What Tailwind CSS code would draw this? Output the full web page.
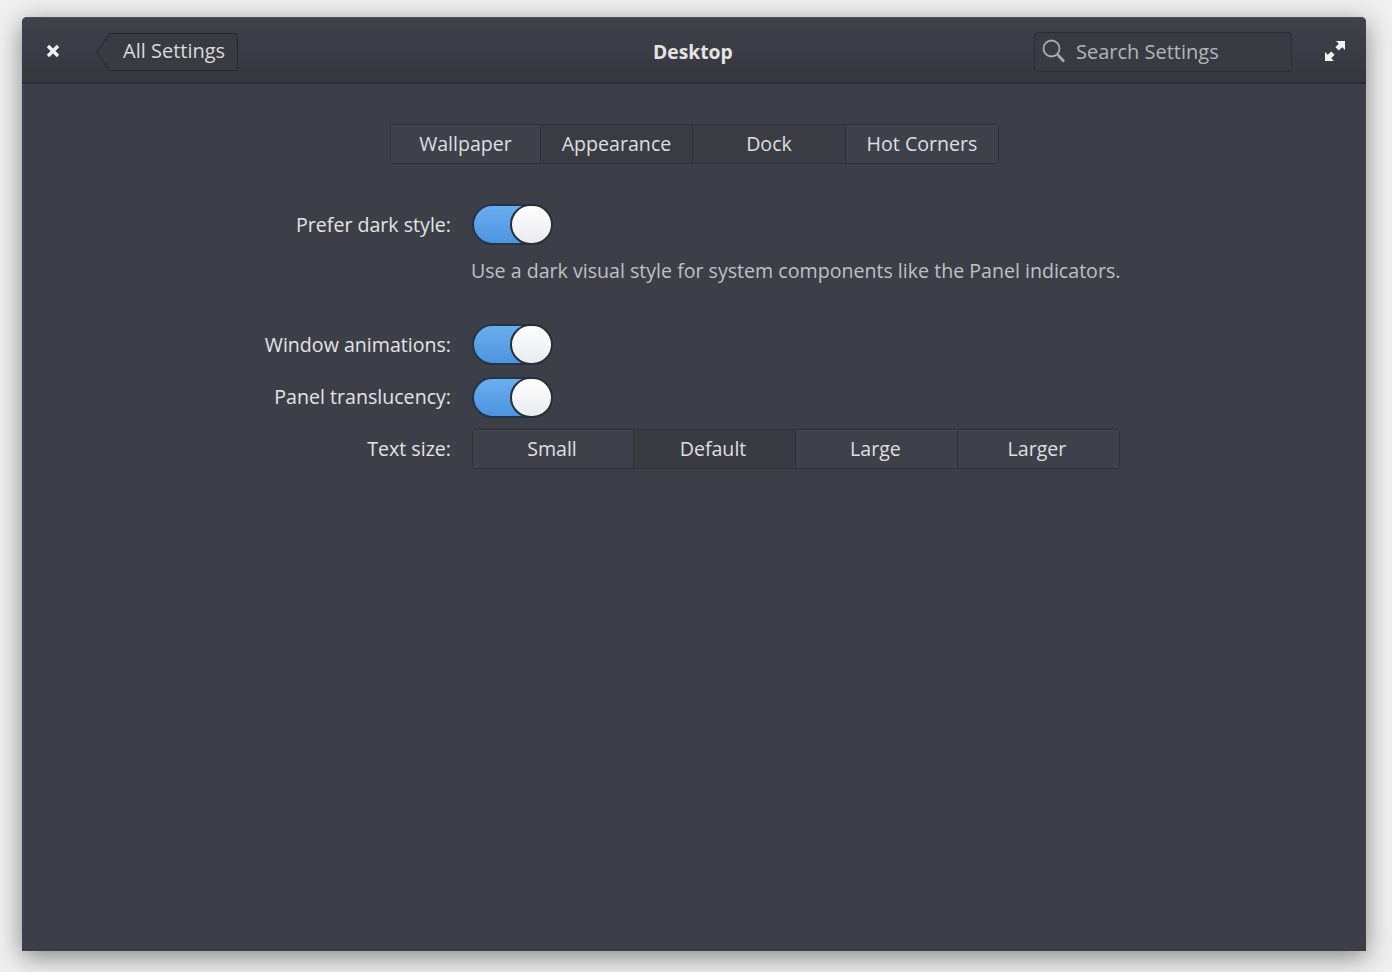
<!DOCTYPE html>
<html lang="en">
<head>
    <meta charset="UTF-8">
    <title>Desktop</title>
    <script src="https://cdn.jsdelivr.net/npm/@tailwindcss/browser@4"></script>
</head>
<body class="w-[1392px] h-[972px] overflow-hidden bg-[#f0f0f0] font-['Open_Sans',sans-serif]">
    <div class="pl-[22px] pt-[17px]">
        <div class="w-[1344px] h-[934px] flex flex-col bg-[#3c3f47] rounded-t-[5px] shadow-[0_6px_26px_rgba(0,0,0,0.45)]">
            <!-- header -->
            <header class="h-[67px] shrink-0 relative flex items-center pl-[23px] pr-[20px] rounded-t-[5px] bg-gradient-to-b from-[#3f424a] to-[#34373e] border-t border-[#4d5058] border-b-2 border-b-[#2b2e34]">
                <svg class="w-4 h-4 mt-[1px]" viewBox="0 0 16 16"><path d="M3 3l10 10M13 3L3 13" stroke="#f2f2f2" stroke-width="3.4" /></svg>
                <div class="ml-[35px] mt-[3px] relative w-[142px] h-[38px]">
                    <svg class="absolute inset-0" width="142" height="38" viewBox="0 0 142 38"><path d="M13.5.5H140a1.5 1.5 0 0 1 1.500 1.500V36a1.500 1.500 0 0 1-1.500 1.500H13.500L.8 19z" fill="#383b42" stroke="#24262b"/></svg>
                    <span class="absolute left-[27px] top-[3px] text-[20px] leading-[30px] text-[#dadada]">All Settings</span>
                </div>
                <h1 class="absolute left-[631px] top-[19px] text-[19.3px] leading-[30px] font-bold text-[#e4e4e4]">Desktop</h1>
                <div class="ml-auto w-[258px] h-[40px] mt-[3px] flex items-center rounded-[4px] bg-[#383b42] border border-[#2c2e34] mr-[32px]">
                    <svg class="ml-[6px] w-[25px] h-[25px] -mt-[3px]" viewBox="0 0 25 25" fill="none" stroke="#a9abaf"><circle cx="10.500" cy="10.500" r="8" stroke-width="1.800"/><path d="M16.500 16.500L23 23.500" stroke-width="2.600"/></svg>
                    <span class="ml-[10px] mt-[1px] text-[20px] leading-[30px] text-[#b4b5b8]">Search Settings</span>
                </div>
                <svg class="w-[22px] h-[22px] mt-[2px]" viewBox="0 0 22 22" fill="#f2f2f2"><path d="M12 1h9v9l-2.800-2.800-3.400 3.400-3.400-3.400 3.400-3.400zM1 21v-9l2.800 2.800 3.400-3.400 3.400 3.400-3.400 3.400L10 21z"/></svg>
            </header>

            <!-- tabs -->
            <div class="flex mt-[40px] ml-[368px]">
                <div class="flex h-[40px] rounded-[3px] border border-[#2d3036] text-[19.6px] text-[#dfdfe0]">
                    <div class="w-[150px] flex items-center justify-center bg-[#3e4149] border-r border-[#2d3036] shadow-[inset_0_1px_0_rgba(255,255,255,0.04)]">Wallpaper</div>
                    <div class="w-[152px] flex items-center justify-center bg-[#393c43] border-r border-[#2d3036]">Appearance</div>
                    <div class="w-[153px] flex items-center justify-center bg-[#3a3d44] border-r border-[#2d3036]">Dock</div>
                    <div class="w-[152px] flex items-center justify-center bg-[#3e4149] shadow-[inset_0_1px_0_rgba(255,255,255,0.04)]">Hot Corners</div>
                </div>
            </div>

            <!-- settings form -->
            <div class="mt-[40px] ml-[245px] grid grid-cols-[184px_auto] justify-start gap-x-[21px] text-[19.6px] text-[#e4e4e5]">
                <div class="h-[41px] flex items-center justify-end whitespace-nowrap">Prefer dark style:</div>
                <div class="h-[41px] relative w-[82px]">
                    <div class="w-[80px] h-[41px] rounded-full border-2 border-[#22354a] bg-gradient-to-b from-[#6aaeee] to-[#4d94e0]"></div>
                    <div class="absolute left-[38px] top-0 w-[43px] h-[41px] rounded-full border-2 border-[#2a2e35] bg-gradient-to-b from-white to-[#e8ebf0]"></div>
                </div>

                <div></div>
                <div class="mt-[11px] h-[30px] leading-[30px] text-[#bfc1c4] mb-[38px] -ml-[1px] whitespace-nowrap">Use a dark visual style for system components like the Panel indicators.</div>

                <div class="h-[41px] flex items-center justify-end whitespace-nowrap">Window animations:</div>
                <div class="h-[41px] relative w-[82px]">
                    <div class="w-[80px] h-[41px] rounded-full border-2 border-[#22354a] bg-gradient-to-b from-[#6aaeee] to-[#4d94e0]"></div>
                    <div class="absolute left-[38px] top-0 w-[43px] h-[41px] rounded-full border-2 border-[#2a2e35] bg-gradient-to-b from-white to-[#e8ebf0]"></div>
                </div>

                <div class="mt-[11px] h-[41px] flex items-center justify-end whitespace-nowrap">Panel translucency:</div>
                <div class="mt-[12px] h-[41px] relative w-[82px]">
                    <div class="w-[80px] h-[41px] rounded-full border-2 border-[#22354a] bg-gradient-to-b from-[#6aaeee] to-[#4d94e0]"></div>
                    <div class="absolute left-[38px] top-0 w-[43px] h-[41px] rounded-full border-2 border-[#2a2e35] bg-gradient-to-b from-white to-[#e8ebf0]"></div>
                </div>

                <div class="mt-[11px] h-[40px] flex items-center justify-end whitespace-nowrap">Text size:</div>
                <div class="mt-[11px] w-[648px] flex h-[40px] rounded-[3px] border border-[#2d3036] text-[#dfdfe0]">
                    <div class="w-[161px] pr-[2px] flex items-center justify-center bg-[#3e4149] border-r border-[#2d3036] shadow-[inset_0_1px_0_rgba(255,255,255,0.04)]">Small</div>
                    <div class="w-[162px] pr-[3px] flex items-center justify-center bg-[#383b42] border-r border-[#2d3036]">Default</div>
                    <div class="w-[162px] pr-[2px] flex items-center justify-center bg-[#3e4149] border-r border-[#2d3036] shadow-[inset_0_1px_0_rgba(255,255,255,0.04)]">Large</div>
                    <div class="w-[161px] pr-[3px] flex items-center justify-center bg-[#3e4149] shadow-[inset_0_1px_0_rgba(255,255,255,0.04)]">Larger</div>
                </div>
            </div>
        </div>
    </div>
</body>
</html>
